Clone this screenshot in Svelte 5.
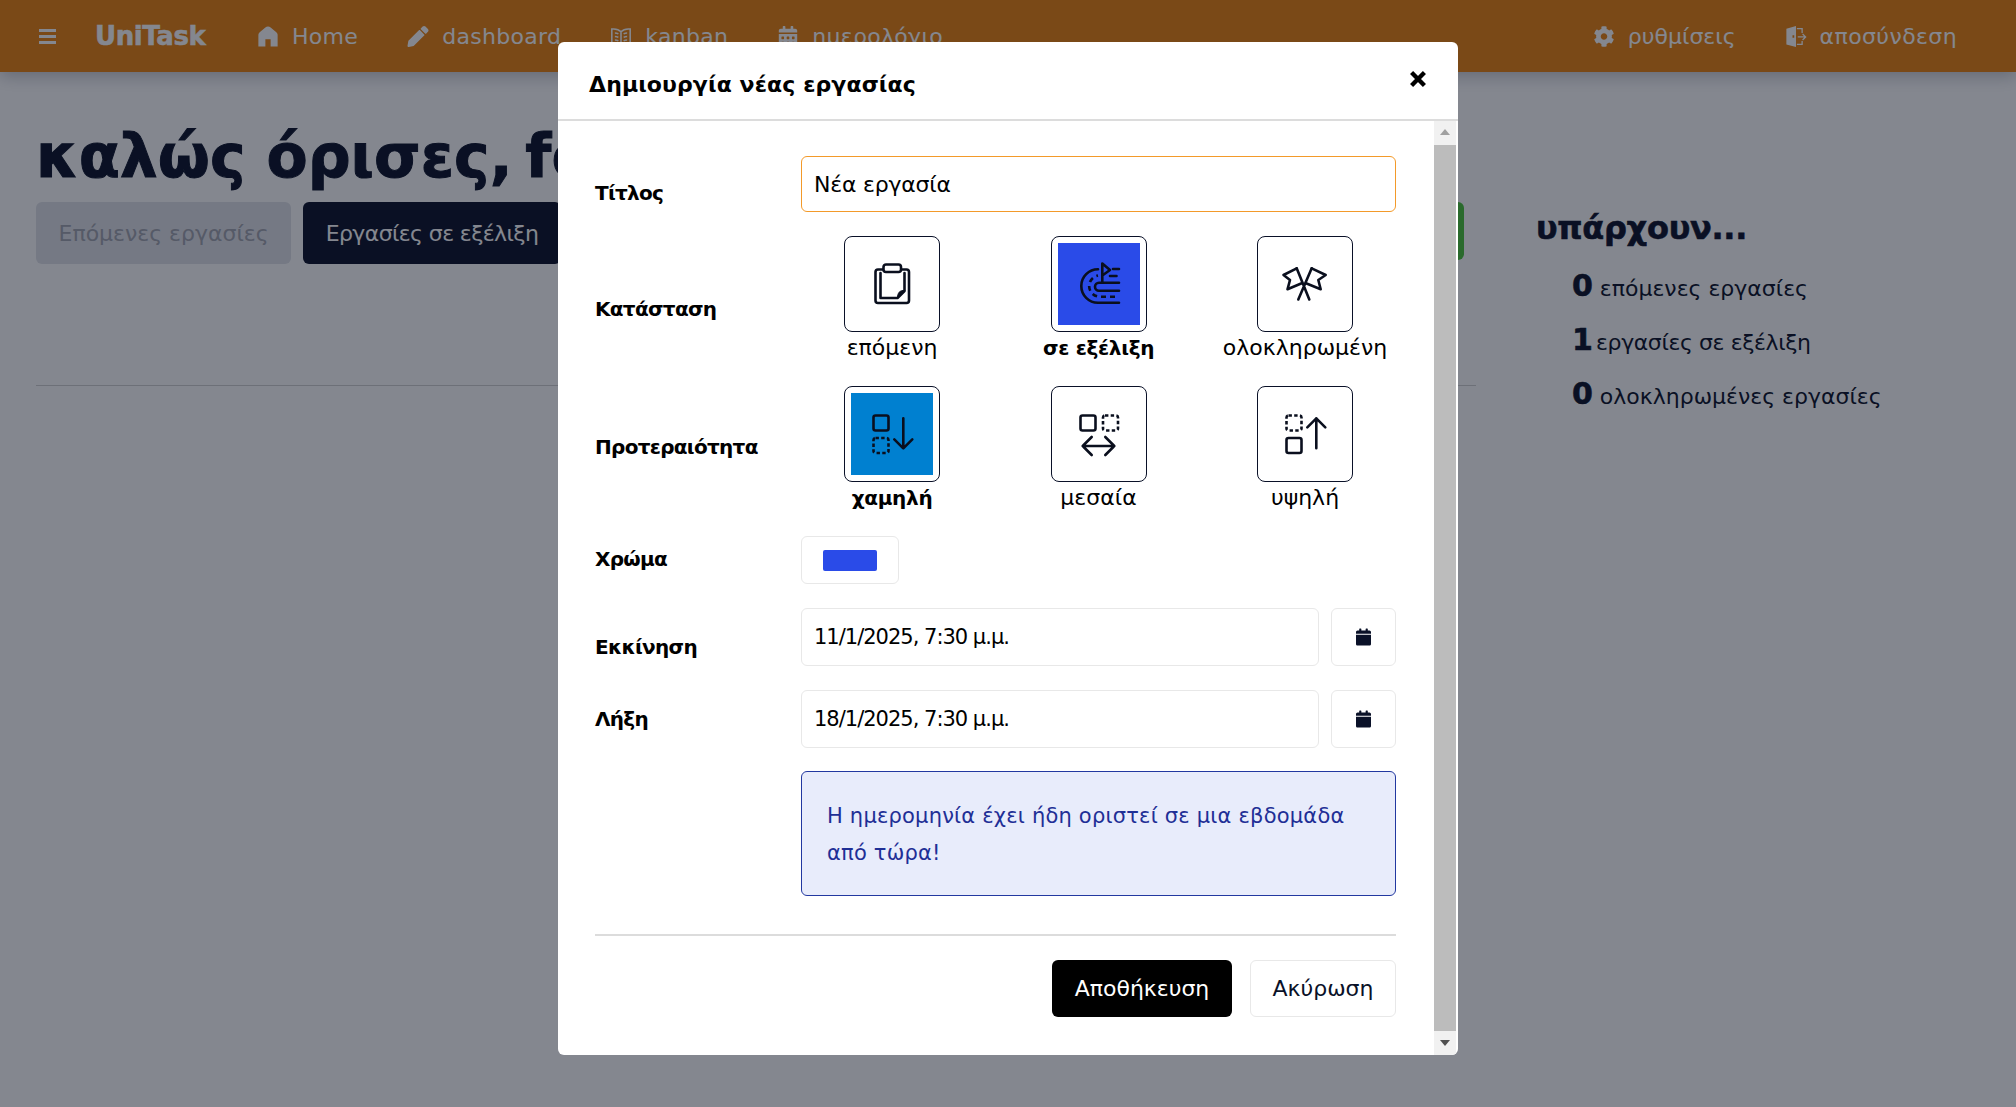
<script>
  const navLeft = [
    { t: 'Home', i: 'home' },
    { t: 'dashboard', i: 'pencil' },
    { t: 'kanban', i: 'book' },
    { t: 'ημερολόγιο', i: 'calendar' }
  ];
  const stats = [
    ['0', 'επόμενες εργασίες'],
    ['1', 'εργασίες σε εξέλιξη'],
    ['0', 'ολοκληρωμένες εργασίες']
  ];
</script>

{#snippet calIcon()}
  <svg class="cal" viewBox="0 0 448 512"><path d="M0 464c0 26.5 21.500 48 48 48h352c26.500 0 48-21.500 48-48V192H0v272zM400 64h-48V16c0-8.800-7.200-16-16-16h-32c-8.800 0-16 7.200-16 16v48H160V16c0-8.800-7.200-16-16-16h-32c-8.800 0-16 7.200-16 16v48H48C21.500 64 0 85.500 0 112v48h448v-48c0-26.500-21.500-48-48-48z"/></svg>
{/snippet}

<div class="page">
  <nav class="nav">
    <div class="burger"><i></i><i></i><i></i></div>
    <span class="brand">UniTask</span>
    <div class="nav-left">
      {#each navLeft as n}
        <span class="nav-item">
          {#if n.i === 'home'}
            <svg class="ni" viewBox="0 0 24 24"><path d="M12 .5C10.800 .5 9.800 1 9 1.700L2.500 7C1.500 7.800 1 8.800 1 10v13.500h8V15h6v8.500h8V10c0-1.200-.5-2.200-1.500-3L15 1.700C14.200 1 13.200 .5 12 .5z"/></svg>
          {:else if n.i === 'pencil'}
            <svg class="ni" viewBox="0 0 512 512"><path d="M497.900 142.100l-46.100 46.100c-4.700 4.700-12.300 4.700-17 0l-111-111c-4.700-4.700-4.700-12.300 0-17l46.100-46.100c18.700-18.700 49.100-18.700 67.900 0l60.100 60.100c18.800 18.700 18.800 49.100 0 67.900zM284.200 99.800L21.600 362.400.4 483.900c-2.900 16.400 11.400 30.600 27.800 27.800l121.500-21.300 262.600-262.600c4.700-4.700 4.700-12.300 0-17l-111-111c-4.800-4.700-12.400-4.700-17.100 0z"/></svg>
          {:else if n.i === 'book'}
            <svg class="ni line" viewBox="0 0 24 24"><path d="M1.500 3.500c4-.5 8 .5 10.500 3 2.500-2.500 6.500-3.500 10.500-3v16c-4-.5-8 .5-10.500 2.500-2.500-2-6.500-3-10.500-2.500zM12 6.500V22M5 8c1.500 0 3 .4 4 1M5 12c1.500 0 3 .4 4 1M5 16c1.500 0 3 .4 4 1M19 8c-1.500 0-3 .4-4 1M19 12c-1.500 0-3 .4-4 1M19 16c-1.500 0-3 .4-4 1"/></svg>
          {:else}
            <svg class="ni" viewBox="0 0 448 512"><path d="M0 464c0 26.500 21.500 48 48 48h352c26.500 0 48-21.500 48-48V192H0v272zm320-196c0-6.600 5.400-12 12-12h40c6.600 0 12 5.400 12 12v40c0 6.600-5.400 12-12 12h-40c-6.600 0-12-5.400-12-12v-40zm0 128c0-6.600 5.400-12 12-12h40c6.600 0 12 5.400 12 12v40c0 6.600-5.400 12-12 12h-40c-6.600 0-12-5.400-12-12v-40zM192 268c0-6.600 5.400-12 12-12h40c6.600 0 12 5.400 12 12v40c0 6.600-5.400 12-12 12h-40c-6.600 0-12-5.400-12-12v-40zm0 128c0-6.600 5.400-12 12-12h40c6.600 0 12 5.400 12 12v40c0 6.600-5.400 12-12 12h-40c-6.600 0-12-5.400-12-12v-40zM64 268c0-6.600 5.400-12 12-12h40c6.600 0 12 5.400 12 12v40c0 6.600-5.400 12-12 12H76c-6.600 0-12-5.400-12-12v-40zm0 128c0-6.600 5.400-12 12-12h40c6.600 0 12 5.400 12 12v40c0 6.600-5.400 12-12 12H76c-6.600 0-12-5.400-12-12v-40zM400 64h-48V16c0-8.800-7.200-16-16-16h-32c-8.800 0-16 7.200-16 16v48H160V16c0-8.800-7.200-16-16-16h-32c-8.800 0-16 7.200-16 16v48H48C21.500 64 0 85.500 0 112v48h448v-48c0-26.500-21.500-48-48-48z"/></svg>
          {/if}
          {n.t}
        </span>
      {/each}
    </div>
    <div class="nav-right">
      <span class="nav-item">
        <svg class="ni" viewBox="0 0 512 512"><path d="M487.400 315.700l-42.600-24.600c4.300-23.200 4.300-47 0-70.200l42.600-24.600c4.900-2.800 7.100-8.600 5.500-14-11.100-35.600-30-67.800-54.700-94.600-3.800-4.100-10-5.100-14.800-2.300L380.800 110c-17.900-15.400-38.500-27.300-60.800-35.100V25.800c0-5.600-3.900-10.500-9.400-11.700-36.700-8.200-74.300-7.800-109.200 0-5.500 1.200-9.400 6.100-9.400 11.700V75c-22.200 7.900-42.800 19.800-60.800 35.100L88.700 85.500c-4.900-2.800-11-1.900-14.800 2.300-24.700 26.700-43.600 58.900-54.700 94.600-1.700 5.400.6 11.200 5.500 14L67.300 221c-4.300 23.200-4.300 47 0 70.200l-42.600 24.600c-4.900 2.800-7.100 8.600-5.500 14 11.100 35.600 30 67.800 54.700 94.600 3.800 4.100 10 5.100 14.800 2.300l42.600-24.600c17.900 15.400 38.500 27.300 60.800 35.100v49.200c0 5.600 3.900 10.500 9.400 11.700 36.700 8.200 74.300 7.800 109.200 0 5.500-1.200 9.400-6.100 9.400-11.700v-49.200c22.200-7.900 42.800-19.800 60.800-35.100l42.600 24.600c4.900 2.800 11 1.900 14.800-2.300 24.700-26.700 43.600-58.900 54.700-94.600 1.500-5.500-.7-11.300-5.600-14.100zM256 336c-44.100 0-80-35.900-80-80s35.900-80 80-80 80 35.900 80 80-35.900 80-80 80z"/></svg>
        ρυθμίσεις
      </span>
      <span class="nav-item">
        <svg class="ni" viewBox="0 0 24 24">
          <path fill-rule="evenodd" d="M1 3l11-3v24L1 21zM8 10.500h2v3H8z"/>
          <path class="door" d="M13 3h6v5M13 21h6v-4M14 12.500h8.500M19.500 9l3.500 3.500-3.500 3.500"/>
        </svg>
        αποσύνδεση
      </span>
    </div>
  </nav>

  <main class="main">
    <section class="left">
      <h1>καλώς όρισες, <span class="fname">foo</span></h1>
      <div class="tabs">
        <span class="tab muted">Επόμενες εργασίες</span>
        <span class="tab dark">Εργασίες σε εξέλιξη</span>
        <span class="tab green">Ολοκληρωμένες εργασίες</span>
      </div>
      <hr class="rule" />
    </section>
    <aside class="side">
      <h2>υπάρχουν...</h2>
      {#each stats as s}
        <p class="stat" class:one={s[0] === '1'}><b>{s[0]}</b> {s[1]}</p>
      {/each}
    </aside>
  </main>

  <div class="overlay"></div>

  <div class="modal">
    <header class="mhead">
      <span class="mtitle">Δημιουργία νέας εργασίας</span>
      <svg class="close" viewBox="0 0 14 14"><path d="M2 2l10 10M12 2L2 12" stroke="#000" stroke-width="3.400" fill="none"/></svg>
    </header>
    <div class="mwrap">
      <div class="mbody">
        <div class="row title-row">
          <span class="lab">Τίτλος</span>
          <div class="field title-input"><span>Νέα εργασία</span></div>
        </div>

        <div class="row icon-row">
          <span class="lab">Κατάσταση</span>
          <div class="choices">
            <div class="choice">
              <div class="box">
                <svg viewBox="0 0 48 48" class="ic">
                  <rect x="7.500" y="9.500" width="33.500" height="33.500" rx="2.500"/>
                  <rect x="15.500" y="4.500" width="17.500" height="7.500" rx="2.500" class="white"/>
                  <path d="M12.500 13v25h17l7-7V13"/>
                  <path d="M29.500 38c0-5 2-8 7-7.500z" class="solid"/>
                </svg>
              </div>
              <span class="cap">επόμενη</span>
            </div>
            <div class="choice on">
              <div class="box"><div class="fill blue">
                <svg viewBox="0 0 48 48" class="ic">
                  <path d="M44 42.700H23A16.700 16.700 0 0 1 23 9.300"/>
                  <path d="M44 22.700H24A4 4 0 0 0 24 30.700H44"/>
                  <path class="dash track" d="M40 36.700H24A10.700 10.700 0 0 1 23 15.500"/>
                  <path d="M27.300 22V3.500L35 10l-7.700 5.500"/>
                  <path d="M38 9h6M35 16h6.500"/>
                </svg>
              </div></div>
              <span class="cap">σε εξέλιξη</span>
            </div>
            <div class="choice">
              <div class="box">
                <svg viewBox="0 0 48 48" class="ic">
                  <path d="M28.300 39.500L15.700 8.300M17.300 39.500L30.700 8.300"/>
                  <path d="M15.700 8.300L2.500 15 9 20 6.500 29.300 20.700 23.300"/>
                  <path d="M30.700 8.300L44.700 15 37.300 20 39.700 29.300 25 23.300"/>
                </svg>
              </div>
              <span class="cap">ολοκληρωμένη</span>
            </div>
          </div>
        </div>

        <div class="row icon-row second">
          <span class="lab">Προτεραιότητα</span>
          <div class="choices">
            <div class="choice on">
              <div class="box"><div class="fill sky">
                <svg viewBox="0 0 48 48" class="ic">
                  <rect x="5.500" y="5.500" width="15" height="15" rx="2"/>
                  <rect class="dash" x="5.500" y="28" width="15" height="15" rx="2"/>
                  <path d="M35.300 8.300v30M26.300 29.300l9 9 9-9"/>
                </svg>
              </div></div>
              <span class="cap">χαμηλή</span>
            </div>
            <div class="choice">
              <div class="box">
                <svg viewBox="0 0 48 48" class="ic">
                  <rect x="5.500" y="5.500" width="15" height="15" rx="2"/>
                  <rect class="dash" x="28" y="5.500" width="15" height="15" rx="2"/>
                  <path d="M7.700 36h31.600M16.700 27l-9 9 9 9M30.300 27l9 9-9 9"/>
                </svg>
              </div>
              <span class="cap">μεσαία</span>
            </div>
            <div class="choice">
              <div class="box">
                <svg viewBox="0 0 48 48" class="ic">
                  <rect class="dash" x="5.500" y="5.500" width="15" height="15" rx="2"/>
                  <rect x="5.500" y="28" width="15" height="15" rx="2"/>
                  <path d="M35.300 38.300v-30M26.300 17.300l9-9 9 9"/>
                </svg>
              </div>
              <span class="cap">υψηλή</span>
            </div>
          </div>
        </div>

        <div class="row color-row">
          <span class="lab">Χρώμα</span>
          <div class="swatch-btn"><span class="swatch"></span></div>
        </div>

        <div class="row date-row">
          <span class="lab low">Εκκίνηση</span>
          <div class="date-group">
            <div class="field date">11/1/2025, 7:30 μ.μ.</div>
            <div class="cal-btn">{@render calIcon()}</div>
          </div>
        </div>

        <div class="row date-row">
          <span class="lab">Λήξη</span>
          <div class="date-group">
            <div class="field date">18/1/2025, 7:30 μ.μ.</div>
            <div class="cal-btn">{@render calIcon()}</div>
          </div>
        </div>

        <div class="row">
          <span class="lab"></span>
          <div class="alert">Η ημερομηνία έχει ήδη οριστεί σε μια εβδομάδα από τώρα!</div>
        </div>

        <div class="divider"></div>

        <div class="actions">
          <span class="btn save">Αποθήκευση</span>
          <span class="btn cancel">Ακύρωση</span>
        </div>
      </div>
      <div class="scroll">
        <span class="arrow up"></span>
        <span class="thumb"></span>
        <span class="arrow down"></span>
      </div>
    </div>
  </div>
</div>

<style>
  :global(body) {
    margin: 0;
    background: #fff;
    font-family: "DejaVu Sans", "Noto Sans", sans-serif;
    color: #0a1128;
    overflow: hidden;
  }
  .page {
    position: relative;
    width: 2016px;
    height: 1107px;
    overflow: hidden;
  }
  .nav {
    display: flex;
    align-items: center;
    height: 72px;
    padding: 0 59px 0 39px;
    background: #ea830f;
    color: #fff;
    font-size: 22px;
    box-shadow: 0 4px 16px rgba(10, 17, 40, 0.25);
    position: relative;
  }
  .burger {
    display: flex;
    flex-direction: column;
    gap: 3px;
    width: 17px;
    margin-right: 39px;
  }
  .burger i {
    display: block;
    height: 3px;
    background: #fff;
  }
  .brand {
    font-size: 26px;
    font-weight: 700;
    letter-spacing: -0.4px;
    width: 162px;
    -webkit-text-stroke: 0.5px #fff;
  }
  .nav-left {
    display: flex;
    gap: 49px;
    letter-spacing: 0.3px;
  }
  .nav-right {
    display: flex;
    gap: 49px;
    margin-left: auto;
  }
  .nav-right .nav-item:last-child {
    letter-spacing: 0.4px;
  }
  .nav-item {
    display: flex;
    align-items: center;
    gap: 13px;
    white-space: nowrap;
  }
  .ni {
    width: 22px;
    height: 21px;
    fill: currentColor;
  }
  .ni.line {
    fill: none;
    stroke: currentColor;
    stroke-width: 1.8;
  }
  .ni .door {
    fill: none;
    stroke: currentColor;
    stroke-width: 1.5;
  }
  .main {
    display: flex;
    padding: 0 36px;
  }
  .left {
    width: 1440px;
  }
  h1 {
    margin: 41px 0 3px;
    font-size: 60px;
    line-height: 86px;
    font-weight: 700;
    white-space: nowrap;
    -webkit-text-stroke: 1px #0a1128;
  }
  .fname {
    margin-left: -8px;
  }
  .tabs {
    display: flex;
    gap: 12px;
    height: 62px;
    width: 1428px;
  }
  .tab {
    display: flex;
    align-items: center;
    padding: 0 22.500px;
    font-size: 22px;
    border-radius: 6px;
    white-space: nowrap;
  }
  .tab.muted {
    background: #e0e3e8;
    color: #a0a4ae;
  }
  .tab.dark {
    background: #0a1128;
    color: #fff;
    letter-spacing: -0.6px;
  }
  .tab.green {
    flex: 1;
    background: #4ac539;
    color: #fff;
    height: 58px;
  }
  .rule {
    margin: 121px 0 0;
    border: 0;
    height: 1px;
    background: #d0d0d0;
  }
  .side {
    padding-left: 60px;
    margin-top: 126px;
  }
  h2 {
    margin: 0 0 9px;
    font-size: 32px;
    line-height: 60px;
    font-weight: 700;
    white-space: nowrap;
    letter-spacing: -0.3px;
    -webkit-text-stroke: 0.6px #0a1128;
  }
  .stat {
    margin: 0 0 16px 36px;
    height: 38px;
    line-height: 38px;
    font-size: 22px;
    white-space: nowrap;
  }
  .stat.one {
    letter-spacing: -0.4px;
  }
  .stat b {
    font-size: 30px;
    -webkit-text-stroke: 0.6px #0a1128;
  }
  .stat.one b {
    margin-right: -3px;
  }
  .overlay {
    position: absolute;
    inset: 0;
    background: rgba(10, 15, 31, 0.5);
  }
  .modal {
    position: absolute;
    left: 558px;
    top: 42px;
    width: 900px;
    height: 1013px;
    display: flex;
    flex-direction: column;
    background: #fff;
    border-radius: 6px;
    overflow: hidden;
    color: #000;
  }
  .mhead {
    flex: none;
    height: 77px;
    display: flex;
    align-items: center;
    justify-content: space-between;
    padding: 0 31px;
    border-bottom: 2px solid #dcdcdc;
  }
  .mtitle {
    font-size: 22px;
    font-weight: 700;
    padding-top: 8px;
    letter-spacing: 0.1px;
  }
  .close {
    width: 18px;
    height: 18px;
    margin-bottom: 4px;
  }
  .mwrap {
    flex: 1;
    display: flex;
    min-height: 0;
    padding-right: 2px;
  }
  .mbody {
    flex: 1;
    padding: 35px 38px 0 37px;
    min-width: 0;
  }
  .row {
    display: flex;
    align-items: center;
  }
  .lab {
    flex: none;
    width: 206px;
    font-size: 20px;
    font-weight: 700;
    letter-spacing: -0.7px;
  }
  .title-row .lab {
    padding-top: 18px;
  }
  .field {
    display: flex;
    align-items: center;
    padding: 0 12px;
    font-size: 21px;
    color: #000;
    border: 1px solid #e8e8e8;
    border-radius: 6px;
    box-sizing: border-box;
    letter-spacing: -1px;
    background: #fff;
  }
  .title-input {
    flex: 1;
    height: 56px;
    border-color: #f39a2a;
    font-size: 22px;
    letter-spacing: -0.2px;
  }
  .icon-row {
    margin-top: 24px;
  }
  .icon-row .lab {
    padding-top: 19px;
  }
  .icon-row.second .lab {
    padding-top: 0;
    padding-bottom: 5px;
  }
  .choices {
    display: flex;
    flex: 1;
    margin-left: 43px;
    gap: 110.500px;
  }
  .choice {
    width: 96px;
    display: flex;
    flex-direction: column;
    align-items: center;
    position: relative;
  }
  .box {
    width: 96px;
    height: 96px;
    box-sizing: border-box;
    border: 1px solid #0a1128;
    border-radius: 8px;
    display: flex;
    align-items: center;
    justify-content: center;
  }
  .fill {
    width: 82px;
    height: 82px;
    display: flex;
    align-items: center;
    justify-content: center;
  }
  .fill.blue {
    background: #2a4be8;
  }
  .fill.sky {
    background: #0080d0;
  }
  .ic {
    width: 48px;
    height: 48px;
    fill: none;
    stroke: #0a0f1e;
    stroke-width: 2.6;
    stroke-linecap: round;
    stroke-linejoin: round;
  }
  .ic .dash {
    stroke-linecap: butt;
    stroke-dasharray: 3.400 2.300;
  }
  .ic .track {
    stroke-dasharray: 5 4;
  }
  .ic .white {
    fill: #fff;
  }
  .ic .solid {
    fill: #0a0f1e;
    stroke-width: 1;
  }
  .cap {
    box-sizing: border-box;
    height: 30px;
    padding-top: 1px;
    font-size: 22px;
    line-height: 30px;
    white-space: nowrap;
  }
  .on .cap {
    font-size: 20px;
    font-weight: 700;
    letter-spacing: -0.3px;
  }
  .color-row {
    margin-top: 24px;
  }
  .color-row .lab {
    margin-bottom: 2px;
  }
  .swatch-btn {
    width: 98px;
    height: 48px;
    box-sizing: border-box;
    border: 1px solid #e8e8e8;
    border-radius: 6px;
    display: flex;
    align-items: center;
    justify-content: center;
  }
  .swatch {
    width: 54px;
    height: 21px;
    background: #2a4be8;
    border-radius: 2px;
  }
  .date-row {
    margin-top: 24px;
  }
  .lab.low {
    padding-top: 20px;
  }
  .date-group {
    display: flex;
    flex: 1;
    gap: 12px;
  }
  .date {
    flex: 1;
    height: 58px;
  }
  .cal-btn {
    width: 65px;
    height: 58px;
    box-sizing: border-box;
    border: 1px solid #e8e8e8;
    border-radius: 6px;
    display: flex;
    align-items: center;
    justify-content: center;
  }
  .cal {
    width: 15px;
    height: 18px;
    fill: #0a1128;
  }
  .alert {
    flex: 1;
    box-sizing: border-box;
    height: 125px;
    margin-top: 23px;
    padding: 26px 25px;
    background: #e8ecfb;
    border: 1px solid #2238a0;
    border-radius: 6px;
    color: #1f2f96;
    font-size: 21px;
    line-height: 37px;
    letter-spacing: 0.2px;
  }
  .divider {
    height: 2px;
    margin-top: 38px;
    background: #dcdcdc;
  }
  .actions {
    display: flex;
    justify-content: flex-end;
    gap: 18px;
    margin-top: 24px;
  }
  .btn {
    display: flex;
    align-items: center;
    justify-content: center;
    box-sizing: border-box;
    height: 57px;
    font-size: 22px;
    border-radius: 6px;
  }
  .save {
    width: 180px;
    background: #000;
    color: #fff;
  }
  .cancel {
    width: 146px;
    border: 1px solid #e8e8e8;
    color: #0a1128;
  }
  .scroll {
    flex: none;
    width: 22px;
    display: flex;
    flex-direction: column;
    background: #f1f1f1;
  }
  .thumb {
    flex: 1;
    background: #bcbcbc;
  }
  .arrow {
    flex: none;
    height: 24px;
    position: relative;
  }
  .arrow::after {
    content: "";
    position: absolute;
    left: 6px;
    border: 5px solid transparent;
  }
  .arrow.up::after {
    top: 3px;
    border-bottom: 6px solid #a0a0a0;
  }
  .arrow.down::after {
    top: 9px;
    border-top: 6px solid #505050;
  }
</style>
